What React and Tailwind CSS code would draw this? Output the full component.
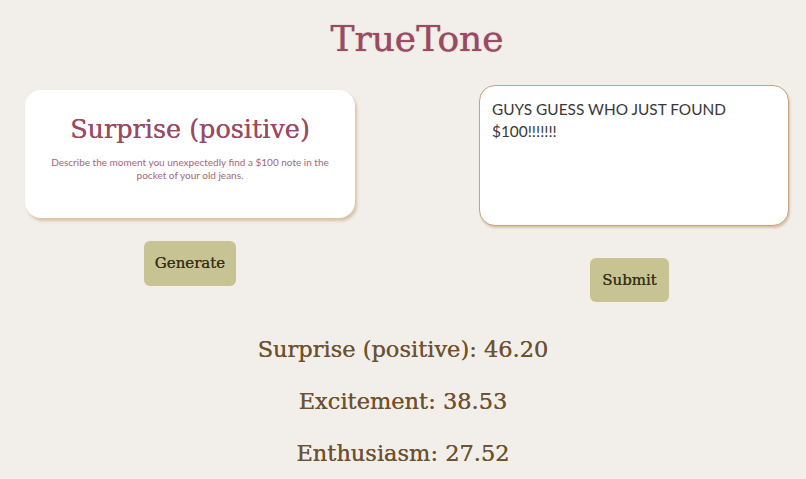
import React, { useState } from "react";

const serif = { fontFamily: '"DejaVu Serif", "Liberation Serif", serif' };

const results = [
  { label: "Surprise (positive)", score: "46.20" },
  { label: "Excitement", score: "38.53" },
  { label: "Enthusiasm", score: "27.52" },
];

const App = () => {
  const [text, setText] = useState("GUYS GUESS WHO JUST FOUND $100!!!!!!!");

  return (
    <div className="min-h-screen bg-[#f2eeea] font-['Lato',sans-serif]">
      {/* Header */}
      <h1
        className="pl-[28px] pt-[17px] text-center text-[36px] leading-[44px] text-[#9a4a62] [text-shadow:0_0_0.9px_#9a4a62]"
        style={serif}
      >
        TrueTone
      </h1>

      <div className="mt-[11px] flex justify-between pl-[25px] pr-[17px]">
        {/* Prompt card */}
        <div className="flex w-[330px] flex-col items-center">
          <div className="mt-[18px] flex h-[128px] w-[330px] flex-col items-center rounded-[16px] bg-white px-6 pt-[22px] shadow-[2px_3px_3px_#d9c3aa]">
            <h2 className="text-[25.5px] leading-[34px] text-[#9a4a62] [text-shadow:0_0_0.6px_#9a4a62]" style={serif}>
              Surprise (positive)
            </h2>
            <p className="mt-[10px] text-center text-[10px] leading-[13px] text-[#a8667a]">
              Describe the moment you unexpectedly find a $100 note in the pocket of your old jeans.
            </p>
          </div>
          <button
            className="mt-[23px] h-[45px] rounded-[6px] bg-[#c7c392] px-[11px] text-[15px] text-[#36321a] [text-shadow:0_0_0.5px_#36321a]"
            style={serif}
          >
            Generate
          </button>
        </div>

        {/* Response box */}
        <div className="mt-[13px] flex w-[310px] flex-col items-center">
          <textarea
            value={text}
            onChange={(e) => setText(e.target.value)}
            className="h-[141px] w-[310px] resize-none rounded-[16px] border border-[#c9a27e] bg-white px-[12px] pt-[12px] text-[15.4px] leading-[22px] text-[#383838] shadow-[1px_2px_2px_#d9c3aa] outline-none"
          />
          <button
            className="mr-[9px] mt-[32px] h-[44px] rounded-[6px] bg-[#c7c392] px-[12px] text-[15px] text-[#36321a] [text-shadow:0_0_0.5px_#36321a]"
            style={serif}
          >
            Submit
          </button>
        </div>
      </div>

      {/* Scores */}
      <div
        className="mt-[32px] flex flex-col items-center gap-[22px] text-[22.5px] leading-[30px] text-[#6e5230] [text-shadow:0_0_0.6px_#6e5230]"
        style={serif}
      >
        {results.map((r) => (
          <p key={r.label}>
            {r.label}: {r.score}
          </p>
        ))}
      </div>
    </div>
  );
};

export default App;
